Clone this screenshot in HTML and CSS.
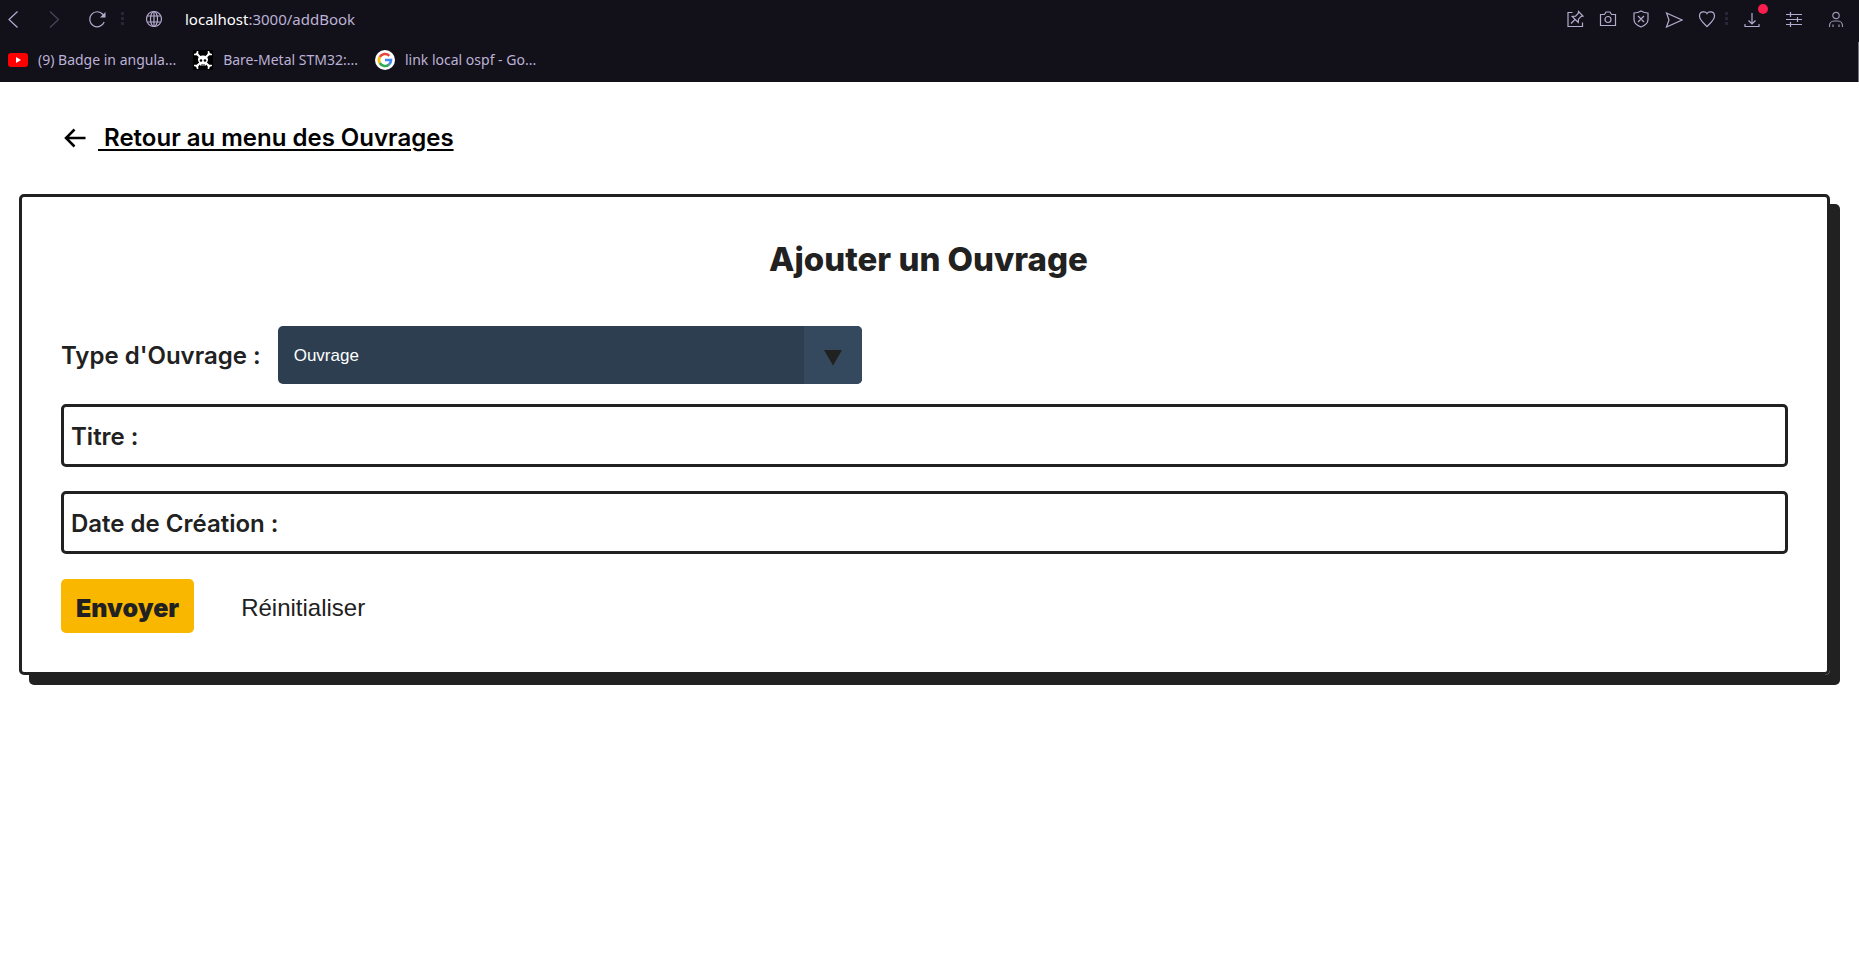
FILE: index.html
```html
<!DOCTYPE html>
<html lang="fr">
<head>
<meta charset="utf-8">
<title>Ajouter un Ouvrage</title>
<link rel="stylesheet" href="styles.css">
</head>
<body>
<header class="browser">
  <div class="toolbar">
    <div class="nav">
      <button class="icon-btn" aria-label="Précédent"><svg width="16" height="20" viewBox="0 0 16 20"><path d="M11.500 2.500 3 10.500l8.500 8"/></svg></button>
      <button class="icon-btn dim" aria-label="Suivant"><svg width="16" height="20" viewBox="0 0 16 20"><path d="M3 2.500l8.500 8-8.500 8"/></svg></button>
      <button class="icon-btn" aria-label="Recharger"><svg width="18" height="20" viewBox="0 0 18 20"><path d="M16.200 13A7.500 7.500 0 1 1 15 5.500L16.500 7.500"/><path class="solid" d="M17.500 3v5.500H12z"/></svg></button>
    </div>
    <span class="dots"></span>
    <svg class="globe" width="18" height="18" viewBox="0 0 18 18"><circle cx="9" cy="9" r="7.500"/><ellipse cx="9" cy="9" rx="3.500" ry="7.500"/><path d="M9 1.500v15M2.500 6h13M2.500 12h13"/></svg>
    <div class="url"><span class="host">localhost</span>:3000/addBook</div>
    <div class="actions">
      <button class="icon-btn" aria-label="Épingler"><svg width="18" height="18" viewBox="0 0 18 18"><path d="M6.500 2.500H2v14h14.500V12.500"/><path d="M12.500 1.500l4.500 4.500-1.800.4-2.700 2.800-.3 3.300-6-6 3.300-.3 2.700-2.700zM9 9.500 5 13.500"/></svg></button>
      <button class="icon-btn" aria-label="Capture"><svg width="18" height="18" viewBox="0 0 18 18"><path d="M1.500 4.500h4L7 2h4l1.500 2.500h4v11h-15z"/><circle cx="9" cy="9.500" r="3"/></svg></button>
      <button class="icon-btn" aria-label="Protection"><svg width="18" height="18" viewBox="0 0 18 18"><path d="M9 1c2 1.300 4.500 2 7 2v6.500c0 3.500-3 6-7 7.500-4-1.500-7-4-7-7.500V3c2.500 0 5-.7 7-2zM6 6l6 6M12 6l-6 6"/></svg></button>
      <button class="icon-btn" aria-label="Envoyer la page"><svg width="18" height="18" viewBox="0 0 18 18"><path d="M1.500 3 17 10 1.500 17 4 10z"/></svg></button>
      <button class="icon-btn" aria-label="Favoris"><svg width="18" height="18" viewBox="0 0 18 18"><path d="M9 3.500c1.500-2.500 7.500-2.500 7.500 2.500C16.500 10 12 13.500 9 16.500 6 13.500 1.500 10 1.500 6c0-5 6-5 7.500-2.500z"/></svg></button>
    </div>
    <span class="dots"></span>
    <div class="tools">
      <button class="icon-btn badge" aria-label="Téléchargements"><svg width="18" height="18" viewBox="0 0 18 18"><path d="M9 3v11M5.500 10.500 9 14l3.500-3.500M2 14v2.500h14V14"/></svg></button>
      <button class="icon-btn" aria-label="Réglages"><svg width="18" height="18" viewBox="0 0 18 18"><path d="M1 4.500h16M1 9.500h16M1 14.500h16M5.500 2v5M12.500 7v5M5.500 12v5"/></svg></button>
      <button class="icon-btn muted" aria-label="Profil"><svg width="18" height="18" viewBox="0 0 18 18"><circle cx="9" cy="5.500" r="3.200"/><path d="M2.500 17v-1c0-3 2-5 4.500-5h4c2.500 0 4.500 2 4.500 5v1M6 14.500V17M12 14.500V17"/></svg></button>
    </div>
  </div>
  <nav class="bookmarks">
    <a class="bookmark" href="#"><svg width="20" height="20" viewBox="0 0 20 20"><rect y="3" width="20" height="14" rx="3" fill="#f00"/><path d="M8 7l5 3-5 3z" fill="#fff"/></svg><span>(9) Badge in angula...</span></a>
    <a class="bookmark" href="#"><svg width="20" height="20" viewBox="0 0 20 20"><path fill="#000" d="M0 0h20v20H0z"/><path d="M3 3l14 14M17 3 3 17" stroke="#fff" stroke-width="2"/><path d="M1 4.500h3.500V1M19 4.500h-3.500V1M1 15.500h3.500V19M19 15.500h-3.500V19" stroke="#fff" stroke-width="1.500" fill="none"/><path d="M5 9.500C5 4 15 4 15 9.500c0 2-1 3-2 3.500v2.500H7V13c-1-.5-2-1.500-2-3.500z" fill="#fff"/><circle cx="8" cy="10.500" r="1.300"/><circle cx="12" cy="10.500" r="1.300"/><path d="M9 14v1.500M11 14v1.500" stroke="#000"/></svg><span>Bare-Metal STM32:...</span></a>
    <a class="bookmark" href="#"><svg width="20" height="20" viewBox="0 0 20 20"><circle cx="10" cy="10" r="10" fill="#fff"/><g fill="none" stroke-width="2.600"><path d="M4.800 7A6 6 0 0 1 14.300 5.800" stroke="#ea4335"/><path d="M4.800 13a6 6 0 0 1 0-6" stroke="#fbbc05"/><path d="M14 14.500A6 6 0 0 1 4.800 13" stroke="#34a853"/><path d="M10 10h6a6 6 0 0 1-2 4.500" stroke="#4285f4"/></g></svg><span>link local ospf - Go...</span></a>
  </nav>
</header>
<main class="page">
  <div class="back">
    <svg width="24" height="24" viewBox="0 0 24 24"><path d="M22.500 12H3M11.500 3.500 3 12l8.500 8.500"/></svg>
    <a href="#">&nbsp;Retour au menu des Ouvrages</a>
  </div>
  <form class="card">
    <h1>Ajouter un Ouvrage</h1>
    <div class="type-row">
      <label for="type">Type d'Ouvrage :</label>
      <div class="select">
        <select id="type"><option>Ouvrage</option></select>
        <span class="caret"><svg width="18" height="16" viewBox="0 0 18 16"><path d="M0 0h18L9 15.500z"/></svg></span>
      </div>
    </div>
    <div class="field"><label for="titre">Titre :</label><input id="titre" type="text"></div>
    <div class="field"><label for="date">Date de Création :</label><input id="date" type="text"></div>
    <div class="buttons">
      <button class="submit" type="submit">Envoyer</button>
      <button class="reset" type="reset">Réinitialiser</button>
    </div>
  </form>
</main>
</body>
</html>
```
FILE: styles.css
```css
* { box-sizing: border-box; }
body {
  margin: 0;
  min-height: 100vh;
  background: #fff;
  color: #212121;
  font-family: Inter, "Liberation Sans", sans-serif;
}
button, input, select { font: inherit; color: inherit; }

.browser {
  background: linear-gradient(#76747c, #76747c) right bottom / 1px 40px no-repeat #121019;
  color: #bcb2d6;
  font-family: "Noto Sans", "Open Sans", sans-serif;
  font-size: 14px;
  height: 82px;
}
.browser svg { flex: none; display: block; }
.toolbar {
  display: flex;
  align-items: center;
  height: 38px;
  padding: 0 14px 0 6px;
}
.toolbar svg { fill: none; stroke: #b5abd0; stroke-width: 1.2; }
.toolbar .solid { fill: #b5abd0; stroke: none; }
.icon-btn { padding: 0; border: 0; background: none; display: flex; }
.dim { opacity: 0.35; }
.muted { opacity: 0.85; }
.nav { display: flex; gap: 25px; }
.dots {
  width: 3px;
  height: 14px;
  margin: 0 15px;
  background: repeating-linear-gradient(#29263a 0 3px, transparent 3px 5px);
}
.globe { margin-left: 6px; }
.url { flex: 1; margin-left: 22px; font-size: 15px; }
.host { color: #fff; }
.actions { display: flex; gap: 15px; }
.actions + .dots { margin: 0 15px 0 9px; }
.tools { display: flex; gap: 24px; }
.badge { position: relative; }
.badge::after {
  content: "";
  position: absolute;
  top: -6px;
  right: -7px;
  width: 10px;
  height: 10px;
  border-radius: 50%;
  background: #fa1e4e;
}
.bookmarks { display: flex; gap: 17px; height: 44px; padding-left: 8px; }
.bookmark {
  display: flex;
  align-items: center;
  gap: 10px;
  color: inherit;
  text-decoration: none;
}
.bookmark span { padding-bottom: 2px; }

.page { padding: 40px 29px 40px 19px; }
.back {
  display: flex;
  align-items: center;
  gap: 11px;
  padding-left: 44px;
  font-size: 24px;
  font-weight: 600;
  line-height: 32px;
}
.back svg { fill: none; stroke: #000; stroke-width: 2.5; }
.back a { color: #000; text-underline-offset: 3px; text-decoration-thickness: 2px; }

.card {
  margin-top: 40px;
  padding: 39px;
  border: 3px solid #212121;
  border-radius: 5px;
  box-shadow: 10px 10px 0 #212121;
}
h1 {
  margin: 0 0 44px;
  padding-left: 8px;
  font-size: 33px;
  font-weight: 800;
  line-height: 46px;
  text-align: center;
}
label { font-size: 24px; font-weight: 600; }
.type-row { display: flex; align-items: center; gap: 17px; margin-bottom: 20px; }
.select {
  display: flex;
  width: 584px;
  height: 58px;
  border-radius: 5px;
  overflow: hidden;
  background: #2c3e50;
}
.select select {
  flex: 1;
  appearance: none;
  border: 0;
  padding: 0 16px;
  background: none;
  color: #fff;
  font: 17px "Liberation Sans", sans-serif;
}
.caret { display: grid; place-items: center; width: 58px; padding-top: 6px; background: #34495e; }
.caret svg { fill: #212121; }
.field {
  display: flex;
  align-items: center;
  gap: 8px;
  height: 63px;
  margin-bottom: 24px;
  padding: 2px 7px 0;
  border: 3px solid #212121;
  border-radius: 5px;
}
.field input { flex: 1; border: 0; outline: 0; background: none; font-size: 24px; }
.buttons { display: flex; align-items: center; gap: 32px; padding-top: 1px; }
.buttons button {
  height: 54px;
  padding: 4px 15px 0;
  border: 0;
  border-radius: 5px;
  background: none;
  font-size: 24px;
}
.buttons .submit { background: #fab700; font-size: 25px; font-weight: 900; }
.buttons .reset { font-family: "Liberation Sans", Arial, sans-serif; }
```
